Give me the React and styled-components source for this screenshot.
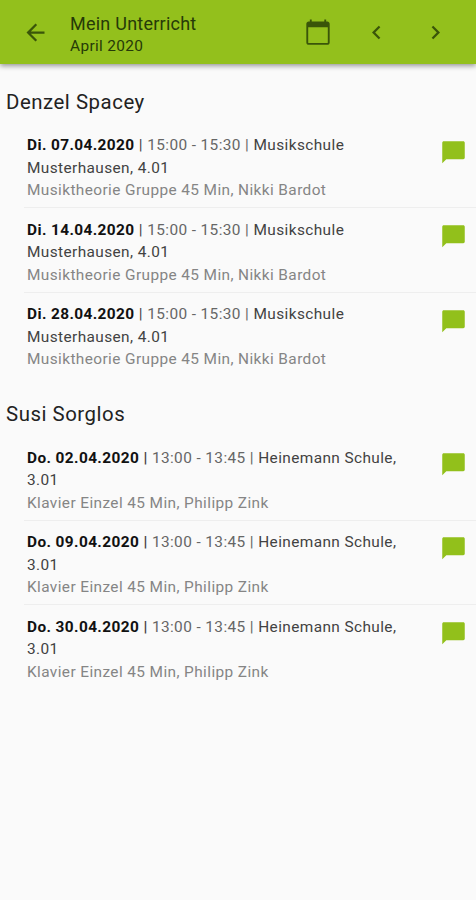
import React from "react";
import styled, { createGlobalStyle } from "styled-components";

const groups = [
  {
    name: "Denzel Spacey",
    lessons: ["Di. 07.04.2020", "Di. 14.04.2020", "Di. 28.04.2020"],
    time: "15:00 - 15:30",
    place: "Musikschule",
    rest: "Musterhausen, 4.01",
    info: "Musiktheorie Gruppe 45 Min, Nikki Bardot",
  },
  {
    name: "Susi Sorglos",
    lessons: ["Do. 02.04.2020", "Do. 09.04.2020", "Do. 30.04.2020"],
    boldBar: true,
    time: "13:00 - 13:45",
    place: "Heinemann Schule,",
    rest: "3.01",
    info: "Klavier Einzel 45 Min, Philipp Zink",
  },
];

const Icon = ({ size, d }) => (
  <svg width={size} height={size} viewBox="0 0 24 24" fill="currentColor">
    <path d={d} />
  </svg>
);

const Lesson = ({ date, group }) => (
  <Row>
    <Details>
      <Line>
        <b>{date}</b> <Bar $bold={group.boldBar}>|</Bar> <Time>{group.time} |</Time>{" "}
        {group.place} <br />
        {group.rest}
      </Line>
      <Info>{group.info}</Info>
    </Details>
    <Comment aria-label="Kommentar">
      <Icon size={27} d="M20.7 2H3.3C2.6 2 2 2.6 2 3.3V21.5l3.6-3.5h15.1c.7 0 1.3-.6 1.3-1.3V3.3C22 2.6 21.4 2 20.7 2z" />
    </Comment>
  </Row>
);

export default function App() {
  return (
    <>
      <GlobalStyle />
      <Header>
        <IconButton aria-label="Zurück" $width="70px">
          <Icon size={27} d="M20 11H7.83l5.59-5.59L12 4l-8 8 8 8 1.41-1.41L7.83 13H20v-2z" />
        </IconButton>
        <Heading>
          <Title>Mein Unterricht</Title>
          <Month>April 2020</Month>
        </Heading>
        <IconButton aria-label="Kalender" $width="58px">
          <Icon size={28} d="M20 3h-1V1.2h-1.6V3H6.6V1.2H5V3H4c-1.1 0-2 .9-2 2v16c0 1.1.9 2 2 2h16c1.1 0 2-.9 2-2V5c0-1.1-.9-2-2-2zm.4 17.9c0 .3-.2.5-.5.5H4.1c-.3 0-.5-.2-.5-.5V8h16.8z" />
        </IconButton>
        <IconButton aria-label="Voriger Monat" $width="59px">
          <Icon size={27} d="M15.41 7.41L14 6l-6 6 6 6 1.41-1.41L10.83 12z" />
        </IconButton>
        <IconButton aria-label="Nächster Monat" $width="59px">
          <Icon size={27} d="M10 6L8.59 7.41 13.17 12l-4.58 4.59L10 18l6-6z" />
        </IconButton>
      </Header>
      <main>
        {groups.map((group) => (
          <section key={group.name}>
            <Name>{group.name}</Name>
            {group.lessons.map((date) => (
              <Lesson key={date} date={date} group={group} />
            ))}
          </section>
        ))}
      </main>
    </>
  );
}

const GlobalStyle = createGlobalStyle`
  * {
    box-sizing: border-box;
  }
  body {
    margin: 0;
    min-height: 100vh;
    background: #fafafa;
    color: #333;
    font-family: Roboto, sans-serif;
  }
  svg {
    display: block;
  }
`;

const Header = styled.header`
  display: flex;
  align-items: center;
  height: 64px;
  padding-right: 11.5px;
  background: #93c01c;
  color: #263a08;
  box-shadow: 0 2px 5px rgba(0, 0, 0, 0.4);
`;

const IconButton = styled.button`
  display: flex;
  justify-content: center;
  flex: none;
  width: ${({ $width }) => $width};
  padding: 0;
  border: none;
  background: none;
  color: #3a5509;
`;

const Heading = styled.div`
  flex: 1;
  padding: 6px 0 0;
`;

const Title = styled.h1`
  margin: 0;
  font-size: 18px;
  font-weight: 400;
  line-height: 22px;
  letter-spacing: 0.24px;
`;

const Month = styled.div`
  font-size: 15.4px;
  line-height: 22px;
  letter-spacing: 0.35px;
`;

const Name = styled.h2`
  margin: 0;
  padding: 26px 6px 8.8px;
  color: #222;
  font-size: 20.4px;
  font-weight: 400;
  line-height: 24px;
  letter-spacing: 0.53px;
`;

const Row = styled.div`
  display: flex;
  justify-content: space-between;
  height: 84.5px;
  margin-left: 24px;
  padding: 11.6px 9px 0 3px;

  & + & {
    border-top: 1px solid #eee;
    padding-top: 10.6px;
  }
`;

const Details = styled.div`
  font-size: 15.4px;
  line-height: 22.4px;
  letter-spacing: 0.4px;
  white-space: nowrap;
`;

const Line = styled.div`
  color: #424242;

  & b {
    color: #111;
  }
`;

const Bar = styled.span`
  font-weight: ${({ $bold }) => ($bold ? 700 : 400)};
`;

const Time = styled.span`
  color: #666;
`;

const Info = styled.div`
  color: #858585;
`;

const Comment = styled.div`
  padding-top: 4.2px;
  color: #92c01b;
`;
